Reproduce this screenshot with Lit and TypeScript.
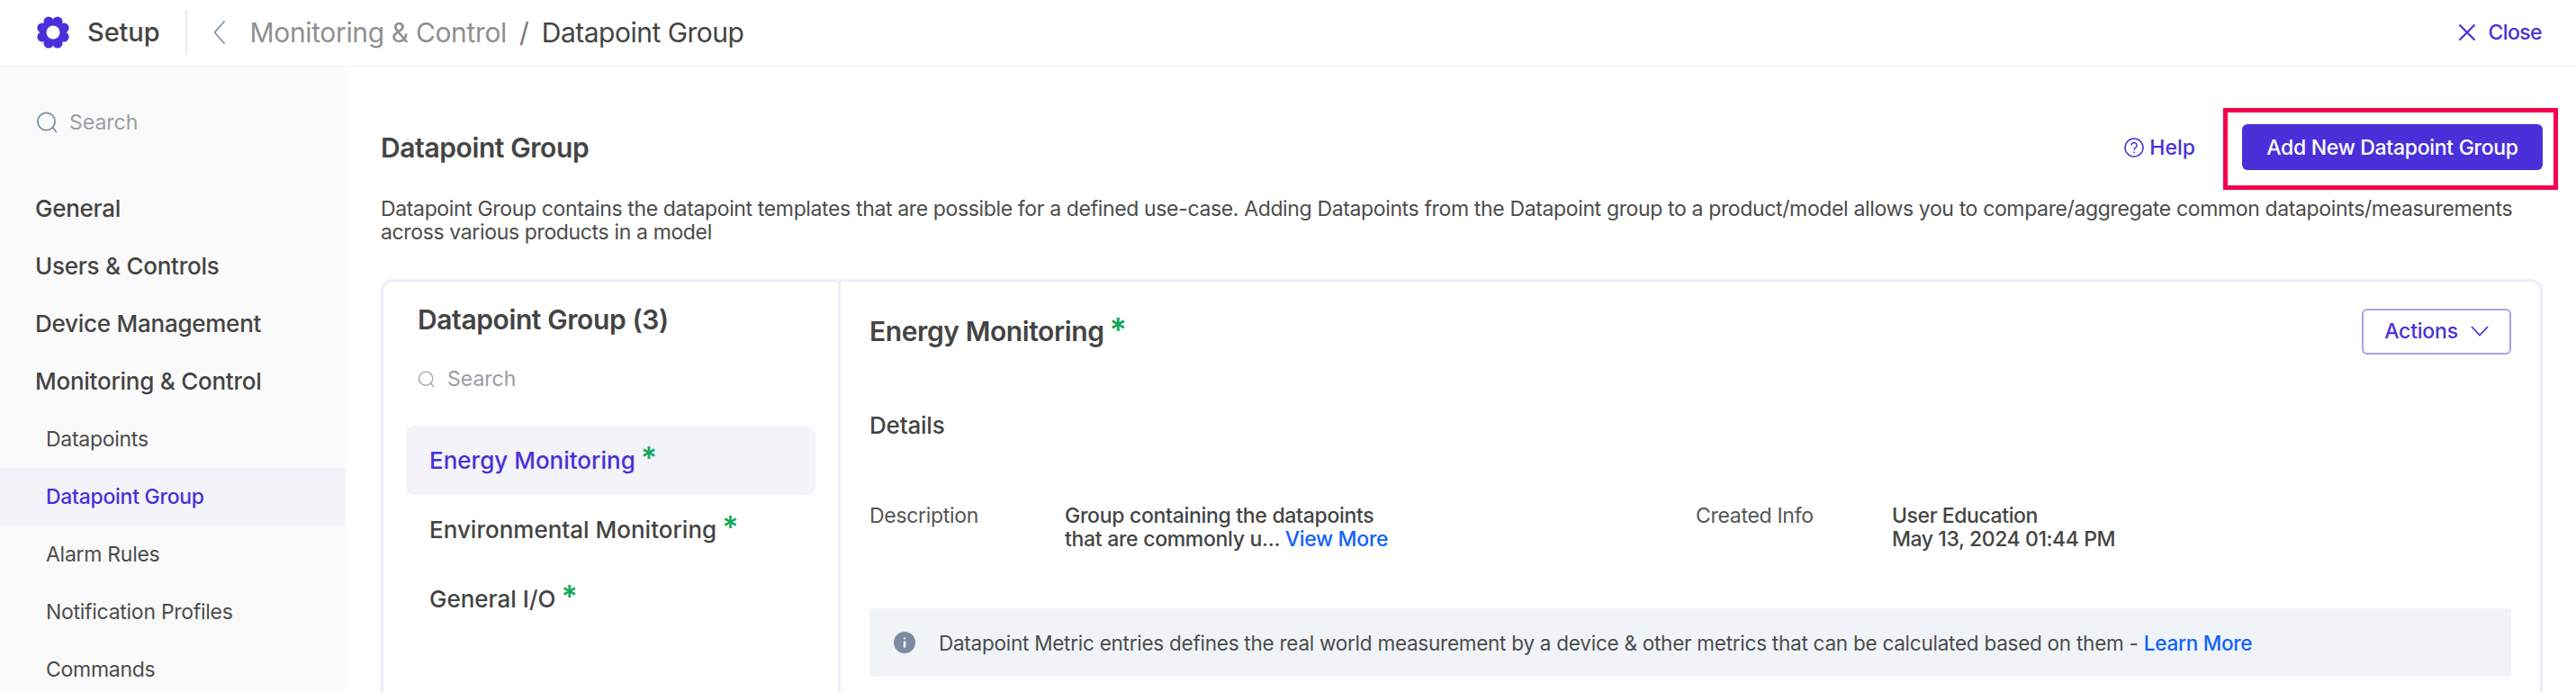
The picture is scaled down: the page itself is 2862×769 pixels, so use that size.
import { LitElement, html, css, svg } from "lit";
import { customElement } from "lit/decorators.js";

const lobes = Array.from({ length: 8 }, (_, i) => {
  const a = (i * Math.PI) / 4 + Math.PI / 8;
  return svg`<circle cx=${19 + 13 * Math.cos(a)} cy=${19 + 13 * Math.sin(a)} r="5.6"></circle>`;
});

const searchIcon = (size: number, color: string) => html`<svg class="ic" width=${size} height=${size} viewBox="0 0 24 24" fill="none" stroke=${color} stroke-width="1.8" stroke-linecap="round"><circle cx="11.5" cy="11" r="9.6"></circle><path d="M18.6 18 22.5 22.6"></path></svg>`;

const star = html`<span class="star">*</span>`;

@customElement("app-root")
export class AppRoot extends LitElement {
  static styles = css`
    :host { display: block; width: 2862px; height: 769px; overflow: hidden; background: #fff; font-family: Inter, "Liberation Sans", sans-serif; color: #444; }
    * { box-sizing: border-box; }
    .ic { flex: none; display: block; }

    .top { height: 74px; display: flex; align-items: center; border-bottom: 1px solid #f2f2f2; padding: 0 38px 2px 40px; }
    .setup { font-size: 29px; font-weight: 500; margin-left: 19px; color: #444; letter-spacing: -0.1px; }
    .vr { width: 2px; height: 50px; background: #e6ebf0; margin: 0 29px 0 28px; }
    .crumb { font-size: 30px; color: #8f8f8f; margin-left: 28px; letter-spacing: -0.35px; }
    .sep { font-size: 30px; color: #777; margin: 0 14px; }
    .cur { font-size: 30px; color: #444; letter-spacing: -0.5px; }
    .close { margin-left: auto; display: flex; align-items: center; gap: 14px; color: #4a30d9; font-size: 23px; font-weight: 500; letter-spacing: -0.6px; }

    .body { display: flex; height: 695px; }
    .side { width: 384px; flex: none; background: #fafafa; padding-top: 46px; overflow: hidden; }
    .sSearch { display: flex; align-items: center; gap: 13px; padding-left: 40px; height: 32px; font-size: 23px; color: #9a9da3; margin-bottom: 47px; }
    .g { height: 64px; display: flex; align-items: center; padding-left: 39px; font-size: 26px; font-weight: 500; color: #444; letter-spacing: -0.25px; }
    .i { height: 64px; display: flex; align-items: center; padding-left: 51px; font-size: 23px; color: #4c4c4c; letter-spacing: -0.28px; }
    .g + .i { margin-top: 1px; }
    .i.on { background: #f3f3fa; color: #4a30d9; font-weight: 500; }

    .main { flex: 1; padding: 64px 37px 0 39px; min-width: 0; }
    .head { display: flex; align-items: center; height: 51px; }
    .h1 { font-size: 30px; font-weight: 600; color: #444; letter-spacing: -0.4px; }
    .help { margin-left: auto; display: flex; align-items: center; gap: 6px; color: #4a30d9; font-size: 23px; font-weight: 500; margin-right: 52px; }
    .btnWrap { position: relative; }
    .btn { width: 334px; height: 51px; background: #4a30d9; color: #fff; border-radius: 6px; display: flex; align-items: center; justify-content: center; font-size: 23px; font-weight: 500; letter-spacing: -0.3px; }
    .mark { position: absolute; inset: -18px -17px -22px -21px; border: 5px solid #f5004f; pointer-events: none; }
    .desc { margin-top: 30px; font-size: 23px; line-height: 26px; color: #4c4c4c; letter-spacing: -0.36px; }

    .card { margin-top: 39px; height: 600px; border: 3px solid #ececfb; border-bottom: none; border-radius: 14px 14px 0 0; display: flex; }
    .list { width: 508px; flex: none; border-right: 3px solid #ececfb; padding: 0 25px 0 25px; }
    .lt { font-size: 30px; font-weight: 600; padding-left: 13px; height: 42px; line-height: 42px; margin-top: 21px; letter-spacing: -0.4px; }
    .lSearch { display: flex; align-items: center; gap: 14px; padding-left: 13px; margin-top: 29px; height: 32px; font-size: 23px; color: #9a9da3; }
    .rows { margin-top: 36px; }
    .row { height: 77px; display: flex; align-items: center; padding-left: 26px; font-size: 26px; font-weight: 500; color: #444; border-radius: 10px; letter-spacing: 0; }
    .row.on { background: #f3f3fa; color: #4a30d9; }
    .star { color: #12a85a; font-weight: 600; font-size: 34px; line-height: 1; align-self: center; margin: -5px 0 0 6px; }

    .pane { flex: 1; padding: 0 32px 0 32px; min-width: 0; }
    .pHead { display: flex; align-items: center; justify-content: space-between; height: 64px; margin-top: 23px; }
    .pTitle { font-size: 30px; font-weight: 600; display: flex; align-items: center; letter-spacing: -0.4px; }
    .pTitle .star { font-size: 36px; margin: -4px 0 0 6px; }
    .actions { width: 166px; height: 51px; border: 2px solid #a9a0ec; border-radius: 6px; display: flex; align-items: center; justify-content: center; gap: 14px; color: #4a30d9; font-size: 23px; font-weight: 500; letter-spacing: -0.2px; }
    .det { font-size: 26px; font-weight: 500; margin-top: 57px; line-height: 32px; letter-spacing: -0.2px; }
    .info { display: grid; grid-template-columns: 217px 701px 218px 1fr; margin-top: 71px; font-size: 23px; line-height: 26px; color: #4c4c4c; letter-spacing: -0.3px; }
    .lab { color: #555; }
    .val { font-weight: 450; color: #444; }
    .when { letter-spacing: -0.42px; }
    a { color: #0f62fe; text-decoration: none; font-weight: 500; }
    .alert { margin-top: 64px; height: 76px; background: #f0f4f8; border-radius: 4px; display: flex; align-items: center; padding-left: 27px; gap: 26px; font-size: 22.5px; color: #4c4c4c; letter-spacing: -0.25px; }
  `;

  render() {
    return html`
      <div class="top">
        <svg class="ic" width="38" height="38" viewBox="0 0 38 38" fill="#4a30d9">${lobes}<circle cx="19" cy="19" r="14"></circle><circle cx="19" cy="19" r="7.5" fill="#fff"></circle></svg>
        <span class="setup">Setup</span>
        <span class="vr"></span>
        <svg class="ic" width="13" height="26" viewBox="0 0 13 26" fill="none" stroke="#8296aa" stroke-width="1.8" stroke-linecap="round"><path d="M12 1 1.5 13 12 25"></path></svg>
        <span class="crumb">Monitoring &amp; Control</span>
        <span class="sep">/</span>
        <span class="cur">Datapoint Group</span>
        <span class="close"><svg class="ic" width="20" height="20" viewBox="0 0 20 20" fill="none" stroke="#4a30d9" stroke-width="2.2"><path d="M1.5 1.5 18.5 18.5M18.5 1.5 1.5 18.5"></path></svg>Close</span>
      </div>
      <div class="body">
        <nav class="side">
          <div class="sSearch">${searchIcon(24, "#7d90a5")}Search</div>
          <div class="g">General</div>
          <div class="g">Users &amp; Controls</div>
          <div class="g">Device Management</div>
          <div class="g">Monitoring &amp; Control</div>
          <div class="i">Datapoints</div>
          <div class="i on">Datapoint Group</div>
          <div class="i">Alarm Rules</div>
          <div class="i">Notification Profiles</div>
          <div class="i">Commands</div>
        </nav>
        <main class="main">
          <div class="head">
            <div class="h1">Datapoint Group</div>
            <div class="help">
              <svg class="ic" width="22" height="22" viewBox="0 0 22 22" fill="none" stroke="#4a30d9" stroke-width="1.5"><circle cx="11" cy="11" r="10"></circle><path d="M8 8.6a3 3 0 1 1 4.6 2.5c-1 .7-1.6 1.2-1.6 2.6M11 15.6v1.6"></path></svg>
              Help
            </div>
            <div class="btnWrap"><div class="btn">Add New Datapoint Group</div><div class="mark"></div></div>
          </div>
          <div class="desc">Datapoint Group contains the datapoint templates that are possible for a defined use-case. Adding Datapoints from the Datapoint group to a product/model allows you to compare/aggregate common datapoints/measurements across various products in a model</div>
          <div class="card">
            <div class="list">
              <div class="lt">Datapoint Group (3)</div>
              <div class="lSearch">${searchIcon(19, "#a3a8ae")}Search</div>
              <div class="rows">
                <div class="row on">Energy Monitoring${star}</div>
                <div class="row">Environmental Monitoring${star}</div>
                <div class="row">General I/O${star}</div>
              </div>
            </div>
            <div class="pane">
              <div class="pHead">
                <div class="pTitle">Energy Monitoring${star}</div>
                <div class="actions">Actions<svg class="ic" width="20" height="12" viewBox="0 0 20 12" fill="none" stroke="#4a30d9" stroke-width="1.8"><path d="M1 1 10 10.5 19 1"></path></svg></div>
              </div>
              <div class="det">Details</div>
              <div class="info">
                <div class="lab">Description</div>
                <div class="val">Group containing the datapoints<br />that are commonly u... <a>View More</a></div>
                <div class="lab">Created Info</div>
                <div class="val when">User Education<br />May 13, 2024 01:44 PM</div>
              </div>
              <div class="alert">
                <svg class="ic" width="24" height="24" viewBox="0 0 24 24"><circle cx="12" cy="12" r="12" fill="#7c8ca3"></circle><path d="M12 10.5v7M12 6.5v1.8" stroke="#fff" stroke-width="2.4" fill="none"></path></svg>
                <span>Datapoint Metric entries defines the real world measurement by a device &amp; other metrics that can be calculated based on them - <a>Learn More</a></span>
              </div>
            </div>
          </div>
        </main>
      </div>
    `;
  }
}
